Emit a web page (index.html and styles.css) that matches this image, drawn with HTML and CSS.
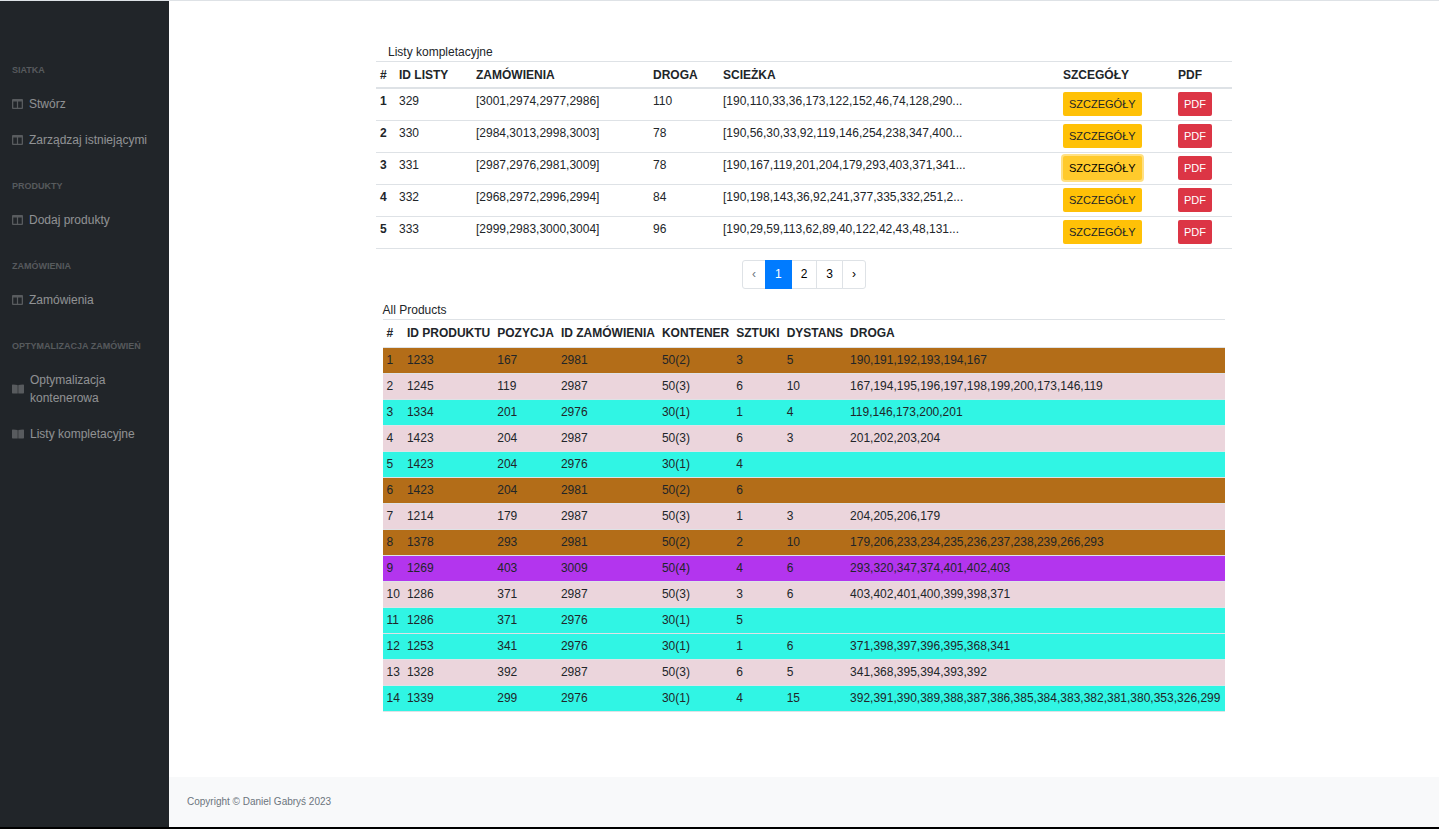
FILE: index.html
```html
<!DOCTYPE html>
<html lang="pl">
<head>
<meta charset="utf-8">
<title>Listy kompletacyjne</title>
<link rel="stylesheet" href="styles.css">
</head>
<body>
<svg class="sprite" aria-hidden="true">
  <symbol id="columns" viewBox="0 0 11 12"><path fill="currentColor" fill-rule="evenodd" d="M1 1h9a1 1 0 0 1 1 1v8a1 1 0 0 1-1 1H1a1 1 0 0 1-1-1V2a1 1 0 0 1 1-1zM1.300 3.500V9.800H4.900V3.500zM6.100 3.500V9.800H9.700V3.500z"/></symbol>
  <symbol id="book" viewBox="0 0 12 12"><path fill="currentColor" d="M0 2.200Q0 1.500.7 1.500 4 1.500 5.300 2 5.700 2.200 5.700 2.600V10.600Q4.500 10.400.7 10.400 0 10.400 0 9.700zM12 2.200Q12 1.500 11.300 1.500 8 1.500 6.700 2 6.300 2.200 6.300 2.600V10.600Q7.500 10.400 11.300 10.400 12 10.400 12 9.700z"/></symbol>
</svg>
<div class="layout">
  <nav class="sidebar">
    <div class="heading">SIATKA</div>
    <a class="link" href="#"><svg class="icon"><use href="#columns"/></svg>Stwórz</a>
    <a class="link" href="#"><svg class="icon"><use href="#columns"/></svg>Zarządzaj istniejącymi</a>
    <div class="heading">PRODUKTY</div>
    <a class="link" href="#"><svg class="icon"><use href="#columns"/></svg>Dodaj produkty</a>
    <div class="heading">ZAMÓWIENIA</div>
    <a class="link" href="#"><svg class="icon"><use href="#columns"/></svg>Zamówienia</a>
    <div class="heading">OPTYMALIZACJA ZAMÓWIEŃ</div>
    <a class="link" href="#"><svg class="icon icon-book"><use href="#book"/></svg>Optymalizacja kontenerowa</a>
    <a class="link" href="#"><svg class="icon icon-book"><use href="#book"/></svg>Listy kompletacyjne</a>
  </nav>
  <div class="content">
    <main class="main">
      <div class="title">Listy kompletacyjne</div>
      <table class="table lists">
        <colgroup><col class="c-num"><col class="c-id"><col class="c-orders"><col class="c-road"><col><col class="c-details"><col class="c-pdf"></colgroup>
        <thead><tr><th>#</th><th>ID LISTY</th><th>ZAMÓWIENIA</th><th>DROGA</th><th>SCIEŻKA</th><th>SZCEGÓŁY</th><th>PDF</th></tr></thead>
        <tbody>
          <tr><th>1</th><td>329</td><td>[3001,2974,2977,2986]</td><td>110</td><td>[190,110,33,36,173,122,152,46,74,128,290...</td><td><button class="btn btn-warning">SZCZEGÓŁY</button></td><td><button class="btn btn-danger">PDF</button></td></tr>
          <tr><th>2</th><td>330</td><td>[2984,3013,2998,3003]</td><td>78</td><td>[190,56,30,33,92,119,146,254,238,347,400...</td><td><button class="btn btn-warning">SZCZEGÓŁY</button></td><td><button class="btn btn-danger">PDF</button></td></tr>
          <tr><th>3</th><td>331</td><td>[2987,2976,2981,3009]</td><td>78</td><td>[190,167,119,201,204,179,293,403,371,341...</td><td><button class="btn btn-warning is-current">SZCZEGÓŁY</button></td><td><button class="btn btn-danger">PDF</button></td></tr>
          <tr><th>4</th><td>332</td><td>[2968,2972,2996,2994]</td><td>84</td><td>[190,198,143,36,92,241,377,335,332,251,2...</td><td><button class="btn btn-warning">SZCZEGÓŁY</button></td><td><button class="btn btn-danger">PDF</button></td></tr>
          <tr><th>5</th><td>333</td><td>[2999,2983,3000,3004]</td><td>96</td><td>[190,29,59,113,62,89,40,122,42,43,48,131...</td><td><button class="btn btn-warning">SZCZEGÓŁY</button></td><td><button class="btn btn-danger">PDF</button></td></tr>
        </tbody>
      </table>
      <div class="pagination">
        <button class="page" disabled>‹</button><button class="page active">1</button><button class="page">2</button><button class="page">3</button><button class="page">›</button>
      </div>
      <div class="products">
        <div>All Products</div>
        <table class="table items">
          <thead><tr><th>#</th><th>ID PRODUKTU</th><th>POZYCJA</th><th>ID ZAMÓWIENIA</th><th>KONTENER</th><th>SZTUKI</th><th>DYSTANS</th><th>DROGA</th></tr></thead>
          <tbody>
            <tr class="brown"><td>1</td><td>1233</td><td>167</td><td>2981</td><td>50(2)</td><td>3</td><td>5</td><td>190,191,192,193,194,167</td></tr>
            <tr class="pink"><td>2</td><td>1245</td><td>119</td><td>2987</td><td>50(3)</td><td>6</td><td>10</td><td>167,194,195,196,197,198,199,200,173,146,119</td></tr>
            <tr class="cyan"><td>3</td><td>1334</td><td>201</td><td>2976</td><td>30(1)</td><td>1</td><td>4</td><td>119,146,173,200,201</td></tr>
            <tr class="pink"><td>4</td><td>1423</td><td>204</td><td>2987</td><td>50(3)</td><td>6</td><td>3</td><td>201,202,203,204</td></tr>
            <tr class="cyan"><td>5</td><td>1423</td><td>204</td><td>2976</td><td>30(1)</td><td>4</td><td></td><td></td></tr>
            <tr class="brown"><td>6</td><td>1423</td><td>204</td><td>2981</td><td>50(2)</td><td>6</td><td></td><td></td></tr>
            <tr class="pink"><td>7</td><td>1214</td><td>179</td><td>2987</td><td>50(3)</td><td>1</td><td>3</td><td>204,205,206,179</td></tr>
            <tr class="brown"><td>8</td><td>1378</td><td>293</td><td>2981</td><td>50(2)</td><td>2</td><td>10</td><td>179,206,233,234,235,236,237,238,239,266,293</td></tr>
            <tr class="purple"><td>9</td><td>1269</td><td>403</td><td>3009</td><td>50(4)</td><td>4</td><td>6</td><td>293,320,347,374,401,402,403</td></tr>
            <tr class="pink"><td>10</td><td>1286</td><td>371</td><td>2987</td><td>50(3)</td><td>3</td><td>6</td><td>403,402,401,400,399,398,371</td></tr>
            <tr class="cyan"><td>11</td><td>1286</td><td>371</td><td>2976</td><td>30(1)</td><td>5</td><td></td><td></td></tr>
            <tr class="cyan"><td>12</td><td>1253</td><td>341</td><td>2976</td><td>30(1)</td><td>1</td><td>6</td><td>371,398,397,396,395,368,341</td></tr>
            <tr class="pink"><td>13</td><td>1328</td><td>392</td><td>2987</td><td>50(3)</td><td>6</td><td>5</td><td>341,368,395,394,393,392</td></tr>
            <tr class="cyan"><td>14</td><td>1339</td><td>299</td><td>2976</td><td>30(1)</td><td>4</td><td>15</td><td>392,391,390,389,388,387,386,385,384,383,382,381,380,353,326,299</td></tr>
          </tbody>
        </table>
      </div>
    </main>
    <footer class="footer">Copyright © Daniel Gabryś 2023</footer>
  </div>
</div>
</body>
</html>
```
FILE: styles.css
```css
* { box-sizing: border-box; }
body {
  margin: 0;
  font: 12px/18px "Liberation Sans", Arial, sans-serif;
  color: #212529;
  background: #fff;
}
.sprite { display: none; }
.layout {
  display: flex;
  min-height: 100vh;
  border-top: 1px solid #dee2e6;
  border-bottom: 2px solid #000;
}

.sidebar {
  flex: 0 0 169px;
  padding-top: 41px;
  background: #212529;
}
.heading {
  padding: 21px 12px 9px;
  font-size: 9px;
  line-height: 14px;
  font-weight: bold;
  color: rgba(255, 255, 255, .25);
}
.link {
  display: flex;
  align-items: center;
  gap: 6px;
  padding: 9px 12px;
  color: rgba(255, 255, 255, .5);
  text-decoration: none;
}
.icon {
  flex: none;
  width: 11px;
  height: 12px;
  color: rgba(255, 255, 255, .25);
}
.icon-book { width: 12px; }

.content {
  flex: 1;
  display: flex;
  flex-direction: column;
  min-width: 0;
}
.main {
  flex: 1;
  width: 100%;
  max-width: 856px;
  margin: 0 auto;
  padding-top: 42px;
}
.title { padding-left: 12px; }

.table { border-spacing: 0; border-top: 1px solid #dee2e6; }
.table th, .table td {
  padding: 3px 3px 4px 4px;
  text-align: left;
  vertical-align: top;
  border-bottom: 1px solid #dee2e6;
}
.table thead th { padding-top: 4px; }
.lists { width: 100%; table-layout: fixed; }
.lists thead th { padding-bottom: 3px; border-bottom-width: 2px; }
.c-num { width: 19px; }
.c-id { width: 77px; }
.c-orders { width: 177px; }
.c-road { width: 70px; }
.c-details { width: 115px; }
.c-pdf { width: 58px; }

.btn {
  display: block;
  height: 24px;
  padding: 0 6px;
  border: 0;
  border-radius: 2px;
  font: 11px/24px "Liberation Sans", Arial, sans-serif;
}
.btn-warning { color: #212529; background: #ffc107; }
.btn-warning.is-current { color: #000; background: #ffca2c; box-shadow: 0 0 0 2px #ffe083; }
.btn-danger { color: #fff; background: #dc3545; }

.pagination {
  display: flex;
  justify-content: center;
  margin: 11px 0 12px;
}
.page {
  padding: 6px 9px;
  border: 1px solid #dee2e6;
  background: #fff;
  color: #000;
  font: 12px/15px "Liberation Sans", Arial, sans-serif;
}
.page + .page { margin-left: -1px; }
.page:first-child { border-radius: 3px 0 0 3px; }
.page:last-child { border-radius: 0 3px 3px 0; }
.page:disabled { color: #6c757d; }
.page.active { position: relative; color: #fff; background: #007bff; border-color: #007bff; }

.products { width: fit-content; margin: 0 auto; }
.items thead th { padding-bottom: 5px; }
.items td:last-child { padding-right: 5px; }
.brown { background: #b36d18; }
.pink { background: #ebd5dc; }
.cyan { background: #30f5e4; }
.purple { background: #b335ee; }

.footer {
  padding: 16px 18px;
  font-size: 10px;
  color: #6c757d;
  background: #f8f9fa;
}
```
